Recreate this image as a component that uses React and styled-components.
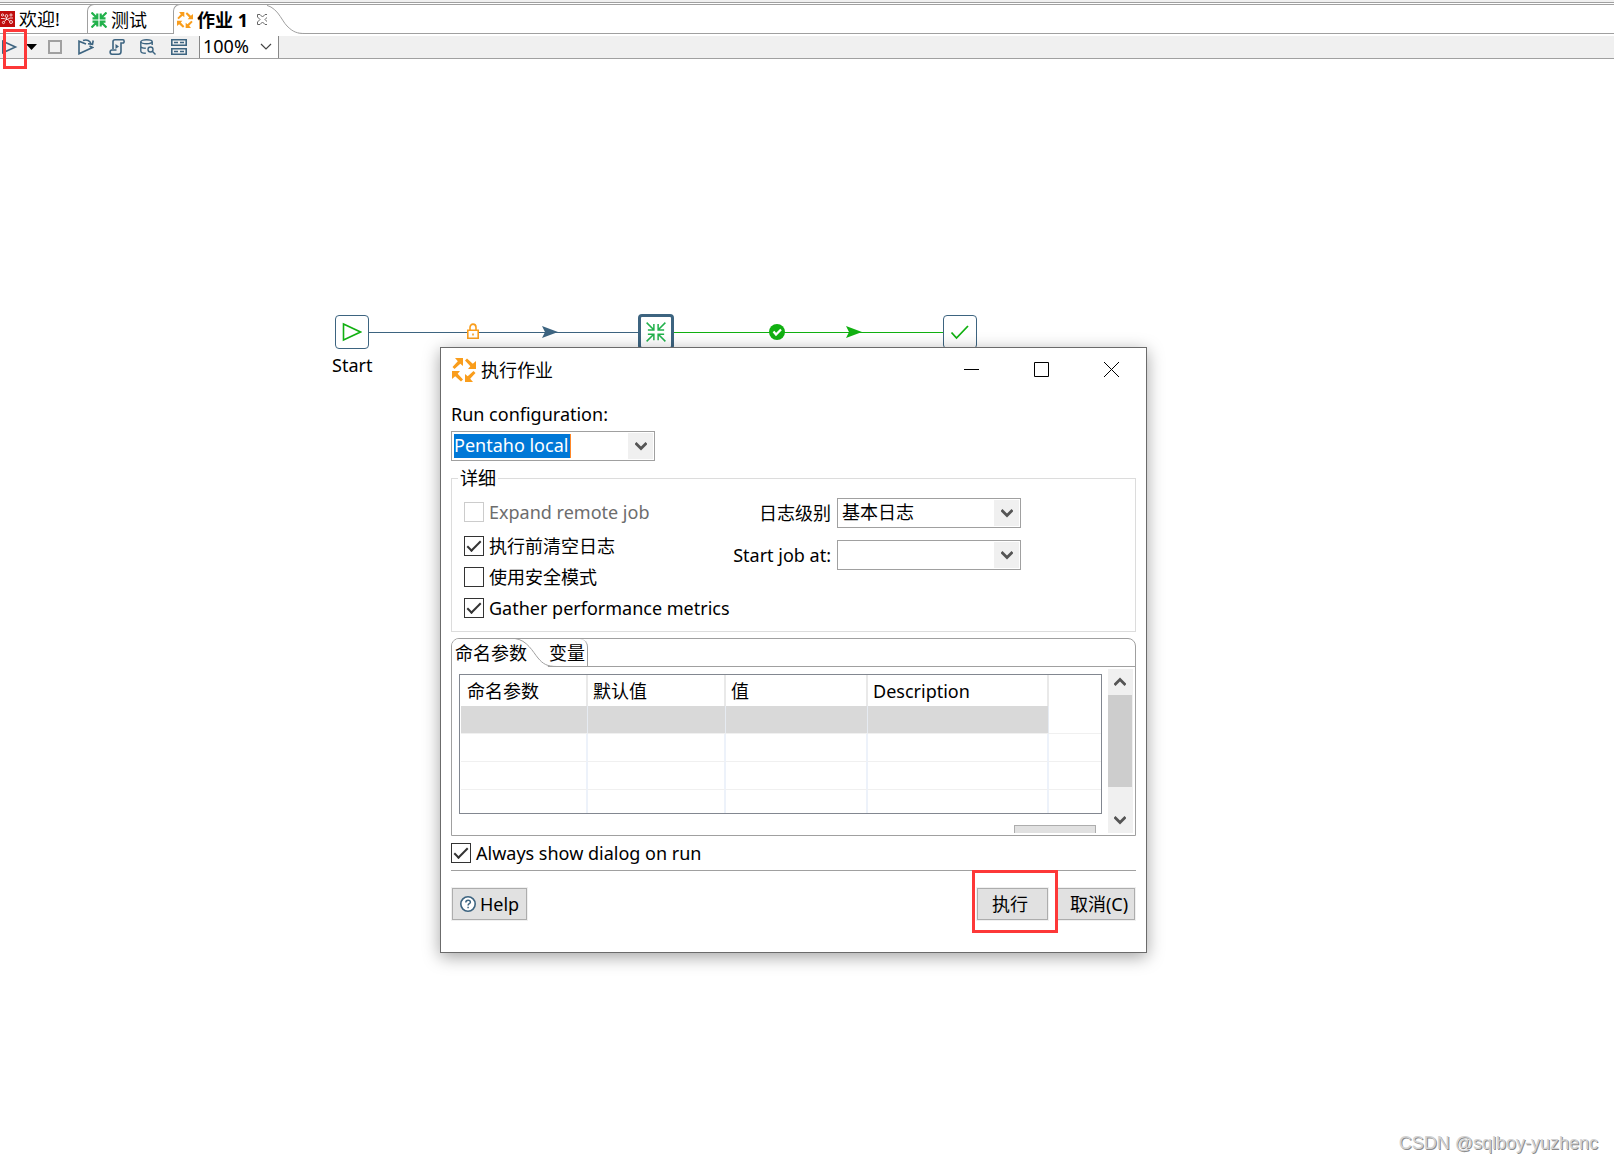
import React from "react";
import styled, { createGlobalStyle, css } from "styled-components";

const line = "#a0a0a0";
const steel = "#3d6480";
const green = "#11b011";
const leaf = "#21b14b";
const orange = "#f99d1c";
const red = "#fd3838";

const GlobalStyle = createGlobalStyle`
  *, *::before, *::after { box-sizing: border-box; }
  body { margin: 0; background: #fff; }
  body, button, input, select {
    font-family: "Noto Sans", "Noto Sans CJK SC", sans-serif;
    font-size: 18px;
    line-height: 24px;
    color: #000;
  }
  button { padding: 0; border: 0; background: none; }
  svg { display: block; flex: none; }
`;

const Page = styled.div`
  display: flex;
  flex-direction: column;
  min-height: 100vh;
  overflow: hidden;
`;

const WindowEdge = styled.div`
  height: 3px;
  background: #f0f0f0;
  border-bottom: 1px solid ${line};
`;

const TabBar = styled.nav`
  display: flex;
  height: 30px;
  margin-top: 1px;
  border-top: 1px solid ${line};
  box-shadow: inset 0 -1px ${line};
`;

const EditorTab = styled.button`
  display: flex;
  align-items: center;
  gap: 4px;
  width: ${(p) => p.$width}px;
  margin-top: -1px;
  padding-left: ${(p) => (p.$first ? 0 : 3)}px;
  white-space: nowrap;
  ${(p) =>
    !p.$first &&
    css`
      border-top: 1px solid ${line};
      border-left: 1px solid ${line};
      border-top-left-radius: 7px;
    `}
  ${(p) =>
    p.$active &&
    css`
      background: #fff;
      font-weight: 700;
    `}
`;

const CloseGlyph = styled.svg`
  margin-left: 5px;
`;

const Toolbar = styled.div`
  display: flex;
  height: 25px;
  background: #f0f0f0;
  border-top: 2px solid #fff;
  border-bottom: 1px solid ${line};
`;

const ToolButton = styled.button`
  display: flex;
  align-items: center;
  justify-content: ${(p) => p.$align || "center"};
  width: ${(p) => p.$width || 31}px;
`;

const MarkedTool = styled.div`
  position: relative;
  display: flex;
`;

const Marker = styled.span`
  position: absolute;
  z-index: 2;
  border: 3px solid ${red};
  pointer-events: none;
`;

const ToolMarker = styled(Marker)`
  inset: -7px -3px -11px 3px;
`;

const RunMarker = styled(Marker)`
  inset: -18px -10px -13px -5px;
`;

const Zoom = styled.label`
  display: flex;
  align-items: center;
  width: 80px;
  margin-left: 5px;
  padding: 0 6px 0 3px;
  background: #fff;
  border: solid #888;
  border-width: 0 1px;

  select {
    flex: 1;
    min-width: 0;
    padding: 0 0 2px;
    border: 0;
    background: none;
    appearance: none;
    line-height: 20px;
  }
`;

const Canvas = styled.main`
  position: relative;
  flex: 1;
`;

const Hops = styled.svg`
  position: absolute;
  left: 369px;
  top: 263px;
`;

const Node = styled.div`
  position: absolute;
  left: ${(p) => p.$x}px;
  top: ${(p) => p.$y}px;
  display: flex;
  flex-direction: column;
  align-items: center;
  gap: 4px;
`;

const NodeBox = styled.div`
  display: grid;
  place-items: center;
  width: ${(p) => (p.$bold ? 36 : 34)}px;
  height: ${(p) => (p.$bold ? 36 : 34)}px;
  border: ${(p) => (p.$bold ? 3 : 1)}px solid ${steel};
  border-radius: 4px;
  background: #fff;
`;

const Dialog = styled.section`
  position: absolute;
  left: 440px;
  top: 288px;
  width: 707px;
  padding: 0 10px 32px;
  background: #fff;
  border: 1px solid #6b6b6b;
  box-shadow: 0 4px 16px rgba(0, 0, 0, 0.36);
`;

const TitleBar = styled.header`
  display: flex;
  align-items: center;
  height: 43px;
  padding-left: 1px;
`;

const Title = styled.h1`
  flex: 1;
  margin: 0 0 0 5px;
  font-size: 18px;
  font-weight: 400;
`;

const WindowButton = styled.button`
  display: grid;
  place-items: center;
  width: 70px;
  height: 30px;

  &:last-child { margin-right: -10px; }
`;

const ConfigLabel = styled.label`
  display: block;
  margin: 11px 0 5px;
`;

const Combo = styled.div`
  display: flex;
  align-items: center;
  width: ${(p) => p.$width}px;
  height: 30px;
  padding: 2px;
  padding-right: 1px;
  border: 1px solid ${line};
  position: relative;
  background: #fff;

  select {
    position: absolute;
    inset: 0;
    width: 100%;
    padding: 0 28px 2px 4px;
    border: 0;
    background: none;
    appearance: none;
  }
`;

const SelectedInput = styled.input`
  width: 117px;
  height: 24px;
  padding: 0 0 2px;
  border: 0;
  border-right: 1px solid #ff8728;
  outline: 0;
  background: #0078d7;
  color: #fff;
`;

const Arrow = styled.span`
  display: grid;
  place-items: center;
  width: 25px;
  height: 26px;
  margin-left: auto;
  background: #f0f0f0;
`;

const Details = styled.fieldset`
  display: flex;
  min-width: 0;
  margin: 5px 0 6px;
  padding: 8px 12px 11px;
  border: 1px solid #dcdcdc;

  legend {
    margin-left: -6px;
    padding: 0 2px;
  }
`;

const Checks = styled.div`
  display: flex;
  flex-direction: column;
  gap: 7px;
  width: 266px;
  padding-top: 2px;
`;

const Check = styled.label`
  display: flex;
  align-items: center;
  gap: 5px;
  white-space: nowrap;
  margin-bottom: ${(p) => (p.$muted ? 3 : 0)}px;
  color: ${(p) => (p.$muted ? "#6d6d6d" : "#000")};

  input {
    display: grid;
    place-items: center;
    flex: none;
    width: 20px;
    height: 20px;
    margin: 0;
    appearance: none;
    border: 1px solid ${(p) => (p.$muted ? "#ccc" : "#333")};
    background: #fff;
  }

  input:checked::after {
    content: "";
    width: 14px;
    height: 7px;
    margin-bottom: 4px;
    border: solid #333;
    border-width: 0 0 2px 2px;
    transform: rotate(-45deg);
  }
`;

const Settings = styled.div`
  display: grid;
  grid-template-columns: 101px 184px;
  gap: 12px 6px;
  align-items: center;
  align-content: start;

  > label {
    justify-self: end;
    white-space: nowrap;
  }
`;

const Folder = styled.div`
  border: 1px solid ${line};
  border-radius: 8px 8px 0 0;
  padding-bottom: 2px;
`;

const FolderTabs = styled.div`
  display: flex;
  height: 28px;
  box-shadow: inset 0 -1px ${line};
`;

const FolderTab = styled.button`
  width: ${(p) => (p.$active ? 76 : 46)}px;
  padding: 0 2px 0 3px;
  white-space: nowrap;
  text-align: ${(p) => (p.$active ? "left" : "right")};
  ${(p) =>
    p.$active
      ? css`
          background: #fff;
          border-top-left-radius: 7px;
        `
      : css`
          margin-left: -15px;
          border-right: 1px solid ${line};
          border-top-right-radius: 8px;
        `}
`;

const FolderCurve = styled.svg`
  margin-left: -13px;
`;

const FolderBody = styled.div`
  display: flex;
  height: 166px;
  overflow: hidden;
`;

const Pane = styled.div`
  flex: 1;
  padding: 7px 6px 0 7px;
`;

const TableFrame = styled.div`
  height: 140px;
  overflow: hidden;
  padding-left: 1px;
  border: 1px solid #828790;
`;

const Params = styled.table`
  width: 100%;
  table-layout: fixed;
  border-collapse: separate;
  border-spacing: 0;

  th {
    height: 31px;
    padding: 0 0 0 5px;
    text-align: left;
    font-weight: 400;
    border-right: 2px solid #e9e9e9;
  }

  td {
    height: 28px;
    padding: 0;
    border-right: 2px solid #edf2fa;
    border-bottom: 1px solid #f0f0f0;
  }

  th:last-child, td:last-child { border-right: 0; }
  th:first-child { padding-left: 6px; }
`;

const SelectedRow = styled.tr`
  td:not(:last-child) {
    background: #d9d9d9;
    background-clip: padding-box;
    border-right: 1px solid #e6ebf2;
  }
`;

const Col = styled.col`
  width: ${(p) => p.$width}px;
`;

const ClippedButton = styled.button`
  display: block;
  width: 82px;
  height: 32px;
  margin: 11px 6px 0 auto;
  background: #e1e1e1;
  border: 1px solid #adadad;
`;

const ScrollBar = styled.div`
  display: flex;
  flex-direction: column;
  width: 25px;
  margin: 2px 2px 0 0;
  background: #f0f0f0;
`;

const ScrollButton = styled.button`
  display: grid;
  place-items: center;
  height: 26px;
  padding-right: 1px;
`;

const Thumb = styled.div`
  width: 24px;
  height: 92px;
  margin-bottom: auto;
  background: #cdcdcd;
`;

const AlwaysRow = styled.div`
  margin-top: 5px;
  padding-bottom: 5px;
  border-bottom: 1px solid ${line};
`;

const Footer = styled.footer`
  display: flex;
  gap: 9px;
  margin-top: 17px;
  padding: 0 1px;
`;

const PushButton = styled.button`
  display: flex;
  align-items: center;
  justify-content: center;
  gap: 4px;
  width: ${(p) => p.$width}px;
  height: 32px;
  padding: ${(p) => p.$pad || "0"};
  white-space: nowrap;
  background: #e1e1e1;
  border: 1px solid #adadad;
  box-shadow: 0 0 0 1px #f0f0f0;
`;

const MarkedButton = styled.div`
  position: relative;
  margin-left: auto;
`;

const Watermark = styled.div`
  position: absolute;
  right: 16px;
  bottom: 8px;
  font-family: "Liberation Sans", sans-serif;
  color: #d2d2d2;
  text-shadow: 1px 1px #8c8c8c;
`;

const Chevron = ({ up }) => (
  <svg width="12" height="10" viewBox="0 0 12 10" aria-hidden="true">
    <path d={up ? "M.5 8L6 2.500 11.500 8" : "M.5 2L6 7.500 11.500 2"} fill="none" stroke="#555" strokeWidth="2.8" />
  </svg>
);

const WelcomeIcon = () => (
  <svg width="15" height="16" viewBox="0 0 15 16" aria-hidden="true">
    <path d="M0 0h15v16H0z" fill="#c00d0d" />
    <g fill="none" stroke="#fff" strokeWidth="0.8">
      <circle cx="2.500" cy="4" r="1.100" />
      <circle cx="6.500" cy="5" r="1.400" />
      <circle cx="11" cy="4" r="1.100" />
      <circle cx="3.500" cy="11.500" r="1.100" />
      <circle cx="11" cy="11" r="1.500" />
      <path d="M1 7.500h3l3 1 3-1.500h3M6.500 6.500v2L4.300 10.500M7.500 8.500l2.200 1.500" />
    </g>
  </svg>
);

const InwardIcon = ({ size = 16, weight = 2.2 }) => (
  <svg width={size} height={size} viewBox="0 0 16 16" fill="none" stroke={leaf} strokeWidth={weight} aria-hidden="true">
    <path d="M.5 .5L6 6M6.300 1.500v4.800H1.500M15.500 .5L10 6M9.700 1.500v4.800h4.800M.5 15.500L6 10M6.300 14.500V9.700H1.500M15.500 15.500L10 10M9.700 14.500V9.700h4.800" />
  </svg>
);

const JobIcon = ({ size = 16 }) => (
  <svg width={size} height={size} viewBox="0 0 24 24" aria-hidden="true">
    <g fill={orange}>
      <path d="M3 0h8v8L8.300 5.700 2.500 11 .5 9l5.300-5.800z" />
      <path d="M24 3v8h-8l2.300-2.700L13 2.500l2-2 5.800 5.300z" />
      <path d="M21 24h-8v-8l2.700 2.300L21.500 13l2 2-5.300 5.800z" />
      <path d="M0 21v-8h8l-2.300 2.700L11 21.500l-2 2-5.800-5.300z" />
    </g>
  </svg>
);

const steelStroke = { fill: "none", stroke: steel, strokeWidth: 1.6 };

export default function App() {
  return (
    <Page>
      <GlobalStyle />
      <WindowEdge />
      <TabBar>
        <EditorTab $first $width={87}>
          <WelcomeIcon />
          欢迎!
        </EditorTab>
        <EditorTab $width={86}>
          <InwardIcon />
          测试
        </EditorTab>
        <EditorTab $active $width={94}>
          <JobIcon />
          作业 1
          <CloseGlyph width="11" height="11" viewBox="0 0 11 11" fill="none" stroke="#666">
            <path d="M.5 .5h2.500l2.500 2.500L8 .5h2.500V3L8 5.500 10.500 8v2.500H8L5.500 8 3 10.500H.5V8L3 5.500 .5 3z" />
          </CloseGlyph>
        </EditorTab>
        <svg width="38" height="29" viewBox="0 0 38 29" aria-hidden="true">
          <path d="M0 0C8 3 14 15 20 21s8 7.500 18 7.500V29H0z" fill="#fff" />
          <path d="M-6-.5C10-.5 14 15 20 21s10 7.500 18 7.500" fill="none" stroke={line} />
        </svg>
      </TabBar>

      <Toolbar>
        <MarkedTool>
          <ToolButton $width={24} $align="flex-start" aria-label="Run">
            <svg width="18" height="14" viewBox="0 0 18 14">
              <path d="M2.800 1.200L15.500 7 2.800 12.800z" {...steelStroke} />
            </svg>
          </ToolButton>
          <ToolMarker />
        </MarkedTool>
        <ToolButton $width={15} aria-label="Run options">
          <svg width="11" height="6" viewBox="0 0 11 6">
            <path d="M0 0h11L5.500 6z" />
          </svg>
        </ToolButton>
        <ToolButton aria-label="Stop">
          <svg width="14" height="14" viewBox="0 0 14 14">
            <path d="M1 1h12v12H1z" fill="none" stroke={line} strokeWidth="2" />
          </svg>
        </ToolButton>
        <ToolButton aria-label="Replay">
          <svg width="16" height="16" viewBox="0 0 16 16" {...steelStroke}>
            <path d="M8 5L1 2.200v12.600L14.500 8.500 11.500 7" />
            <path d="M5 1.500C9 .2 12 1.500 13 4.800M15.200 1.500l-.7 3.800L10 4.800" />
          </svg>
        </ToolButton>
        <ToolButton aria-label="Script">
          <svg width="16" height="16" viewBox="0 0 16 16" {...steelStroke}>
            <path d="M4 10V2.500C4 1 5 .8 6 .8h8c1.500 0 1.500 3.200 0 3.200h-2v8.500c0 2-1 2.700-2.500 2.700H3C.5 15.200 .5 11 3 11h4.500" />
            <path d="M6.500 5v5l3.500-2.500z" fill={steel} stroke="none" />
          </svg>
        </ToolButton>
        <ToolButton aria-label="Explore database">
          <svg width="16" height="16" viewBox="0 0 16 16" {...steelStroke} strokeWidth="1.400">
            <ellipse cx="6.500" cy="2.700" rx="5.700" ry="2" />
            <path d="M.8 2.700V12c0 1.500 2 2.300 5 2.300M12.200 2.700V6M.8 7.500c.5 1.200 2 1.800 5 1.800" />
            <circle cx="10.500" cy="10.500" r="2.500" />
            <path d="M12.300 12.300l3.200 3.200" />
          </svg>
        </ToolButton>
        <ToolButton aria-label="Results">
          <svg width="16" height="16" viewBox="0 0 16 16" {...steelStroke}>
            <path d="M.8 .8h14.400v5.400H.8zM.8 9.800h14.400v5.400H.8zM3 3.500h4M9 3.500h4M3 12.500h4M9 12.500h4" />
          </svg>
        </ToolButton>
        <Zoom>
          <select aria-label="Zoom" defaultValue="100%">
            <option>100%</option>
          </select>
          <svg width="12" height="8" viewBox="0 0 12 8" fill="none" stroke="#444" strokeWidth="1.200">
            <path d="M1 1l5 5 5-5" />
          </svg>
        </Zoom>
      </Toolbar>

      <Canvas>
        <Hops width="574" height="22" viewBox="0 0 574 22">
          <path d="M0 10.500h269" stroke={steel} />
          <path d="M305 10.500h269" stroke={green} />
          <g>
            <path d="M98 9h12v8H98z" fill="#fff" />
            <path d="M98.800 8.300h10.400v8H98.800zM101 8V5.500c0-4.500 6-4.500 6 0V8" fill="none" stroke={orange} strokeWidth="1.600" />
            <path d="M103.200 11.500h1.600v2h-1.600z" fill={orange} />
          </g>
          <path d="M173 4l16 6-16 6 3-6z" fill={steel} />
          <circle cx="408" cy="10" r="8" fill={green} />
          <path d="M404.500 9.500l2.500 3 5-5" fill="none" stroke="#fff" strokeWidth="2.200" />
          <path d="M477 4l16 6-16 6 3-6z" fill={green} />
        </Hops>

        <Node $x={332} $y={256}>
          <NodeBox>
            <svg width="20" height="20" viewBox="0 0 20 20">
              <path d="M1.500 2L18.500 10l-17 8z" fill="none" stroke={green} strokeWidth="1.600" />
            </svg>
          </NodeBox>
          Start
        </Node>
        <Node $x={638} $y={255}>
          <NodeBox $bold>
            <InwardIcon size={20} weight={1.2} />
          </NodeBox>
        </Node>
        <Node $x={943} $y={256}>
          <NodeBox>
            <svg width="20" height="16" viewBox="0 0 20 16">
              <path d="M1.500 8.500l5 5.500L18 2" fill="none" stroke={green} strokeWidth="1.800" />
            </svg>
          </NodeBox>
        </Node>

        <Dialog role="dialog" aria-labelledby="dialog-title">
          <TitleBar>
            <JobIcon size={24} />
            <Title id="dialog-title">执行作业</Title>
            <WindowButton aria-label="Minimize">
              <svg width="15" height="15" viewBox="0 0 15 15">
                <path d="M0 7.500h15" stroke="#000" />
              </svg>
            </WindowButton>
            <WindowButton aria-label="Maximize">
              <svg width="15" height="15" viewBox="0 0 15 15">
                <path d="M.5 .5h14v14H.5z" fill="none" stroke="#000" />
              </svg>
            </WindowButton>
            <WindowButton aria-label="Close">
              <svg width="15" height="15" viewBox="0 0 15 15">
                <path d="M0 0l15 15M15 0L0 15" stroke="#000" />
              </svg>
            </WindowButton>
          </TitleBar>

          <ConfigLabel htmlFor="run-config">Run configuration:</ConfigLabel>
          <Combo $width={204}>
            <SelectedInput id="run-config" defaultValue="Pentaho local" />
            <Arrow>
              <Chevron />
            </Arrow>
          </Combo>

          <Details>
            <legend>详细</legend>
            <Checks>
              <Check $muted>
                <input type="checkbox" disabled />
                Expand remote job
              </Check>
              <Check>
                <input type="checkbox" defaultChecked />
                执行前清空日志
              </Check>
              <Check>
                <input type="checkbox" />
                使用安全模式
              </Check>
              <Check>
                <input type="checkbox" defaultChecked />
                Gather performance metrics
              </Check>
            </Checks>
            <Settings>
              <label htmlFor="log-level">日志级别</label>
              <Combo $width={184}>
                <Arrow>
                  <Chevron />
                </Arrow>
                <select id="log-level" defaultValue="基本日志">
                  <option>基本日志</option>
                </select>
              </Combo>
              <label htmlFor="start-at">Start job at:</label>
              <Combo $width={184}>
                <Arrow>
                  <Chevron />
                </Arrow>
                <select id="start-at" defaultValue="">
                  <option value="" />
                </select>
              </Combo>
            </Settings>
          </Details>

          <Folder>
            <FolderTabs role="tablist">
              <FolderTab $active role="tab" aria-selected="true">
                命名参数
              </FolderTab>
              <FolderCurve width="42" height="28" viewBox="0 0 42 28" aria-hidden="true">
                <path d="M14 9L33 27.500V28H0v-2h14z" fill="#fff" />
                <path d="M0-.5C12 1 18 13 23 19s9 8.500 19 8.500" fill="none" stroke={line} />
              </FolderCurve>
              <FolderTab role="tab" aria-selected="false">
                变量
              </FolderTab>
            </FolderTabs>
            <FolderBody>
              <Pane>
                <TableFrame>
                  <Params>
                    <colgroup>
                      <Col $width={127} />
                      <Col $width={138} />
                      <Col $width={142} />
                      <Col $width={181} />
                      <col />
                    </colgroup>
                    <thead>
                      <tr>
                        <th>命名参数</th>
                        <th>默认值</th>
                        <th>值</th>
                        <th>Description</th>
                        <th />
                      </tr>
                    </thead>
                    <tbody>
                      <SelectedRow>
                        <td /><td /><td /><td /><td />
                      </SelectedRow>
                      {[1, 2, 3].map((n) => (
                        <tr key={n}>
                          <td /><td /><td /><td /><td />
                        </tr>
                      ))}
                    </tbody>
                  </Params>
                </TableFrame>
                <ClippedButton aria-label="Arguments" />
              </Pane>
              <ScrollBar>
                <ScrollButton aria-label="Scroll up">
                  <Chevron up />
                </ScrollButton>
                <Thumb />
                <ScrollButton aria-label="Scroll down">
                  <Chevron />
                </ScrollButton>
              </ScrollBar>
            </FolderBody>
          </Folder>

          <AlwaysRow>
            <Check>
              <input type="checkbox" defaultChecked />
              Always show dialog on run
            </Check>
          </AlwaysRow>

          <Footer>
            <PushButton $width={75}>
              <svg width="16" height="16" viewBox="0 0 16 16">
                <circle cx="8" cy="8" r="7.200" fill="#fff" stroke={steel} strokeWidth="1.600" />
                <path d="M5.800 6.500c0-3 4.600-3 4.600-.3 0 1.500-2.300 1.500-2.300 3.200M8.100 10.800v1.500" fill="none" stroke={steel} strokeWidth="1.500" />
              </svg>
              Help
            </PushButton>
            <MarkedButton>
              <PushButton $width={71} $pad="0 5px 0 0">执行</PushButton>
              <RunMarker />
            </MarkedButton>
            <PushButton $width={78} $pad="0 0 0 6px">取消(C)</PushButton>
          </Footer>
        </Dialog>

        <Watermark>CSDN @sqlboy-yuzhenc</Watermark>
      </Canvas>
    </Page>
  );
}
